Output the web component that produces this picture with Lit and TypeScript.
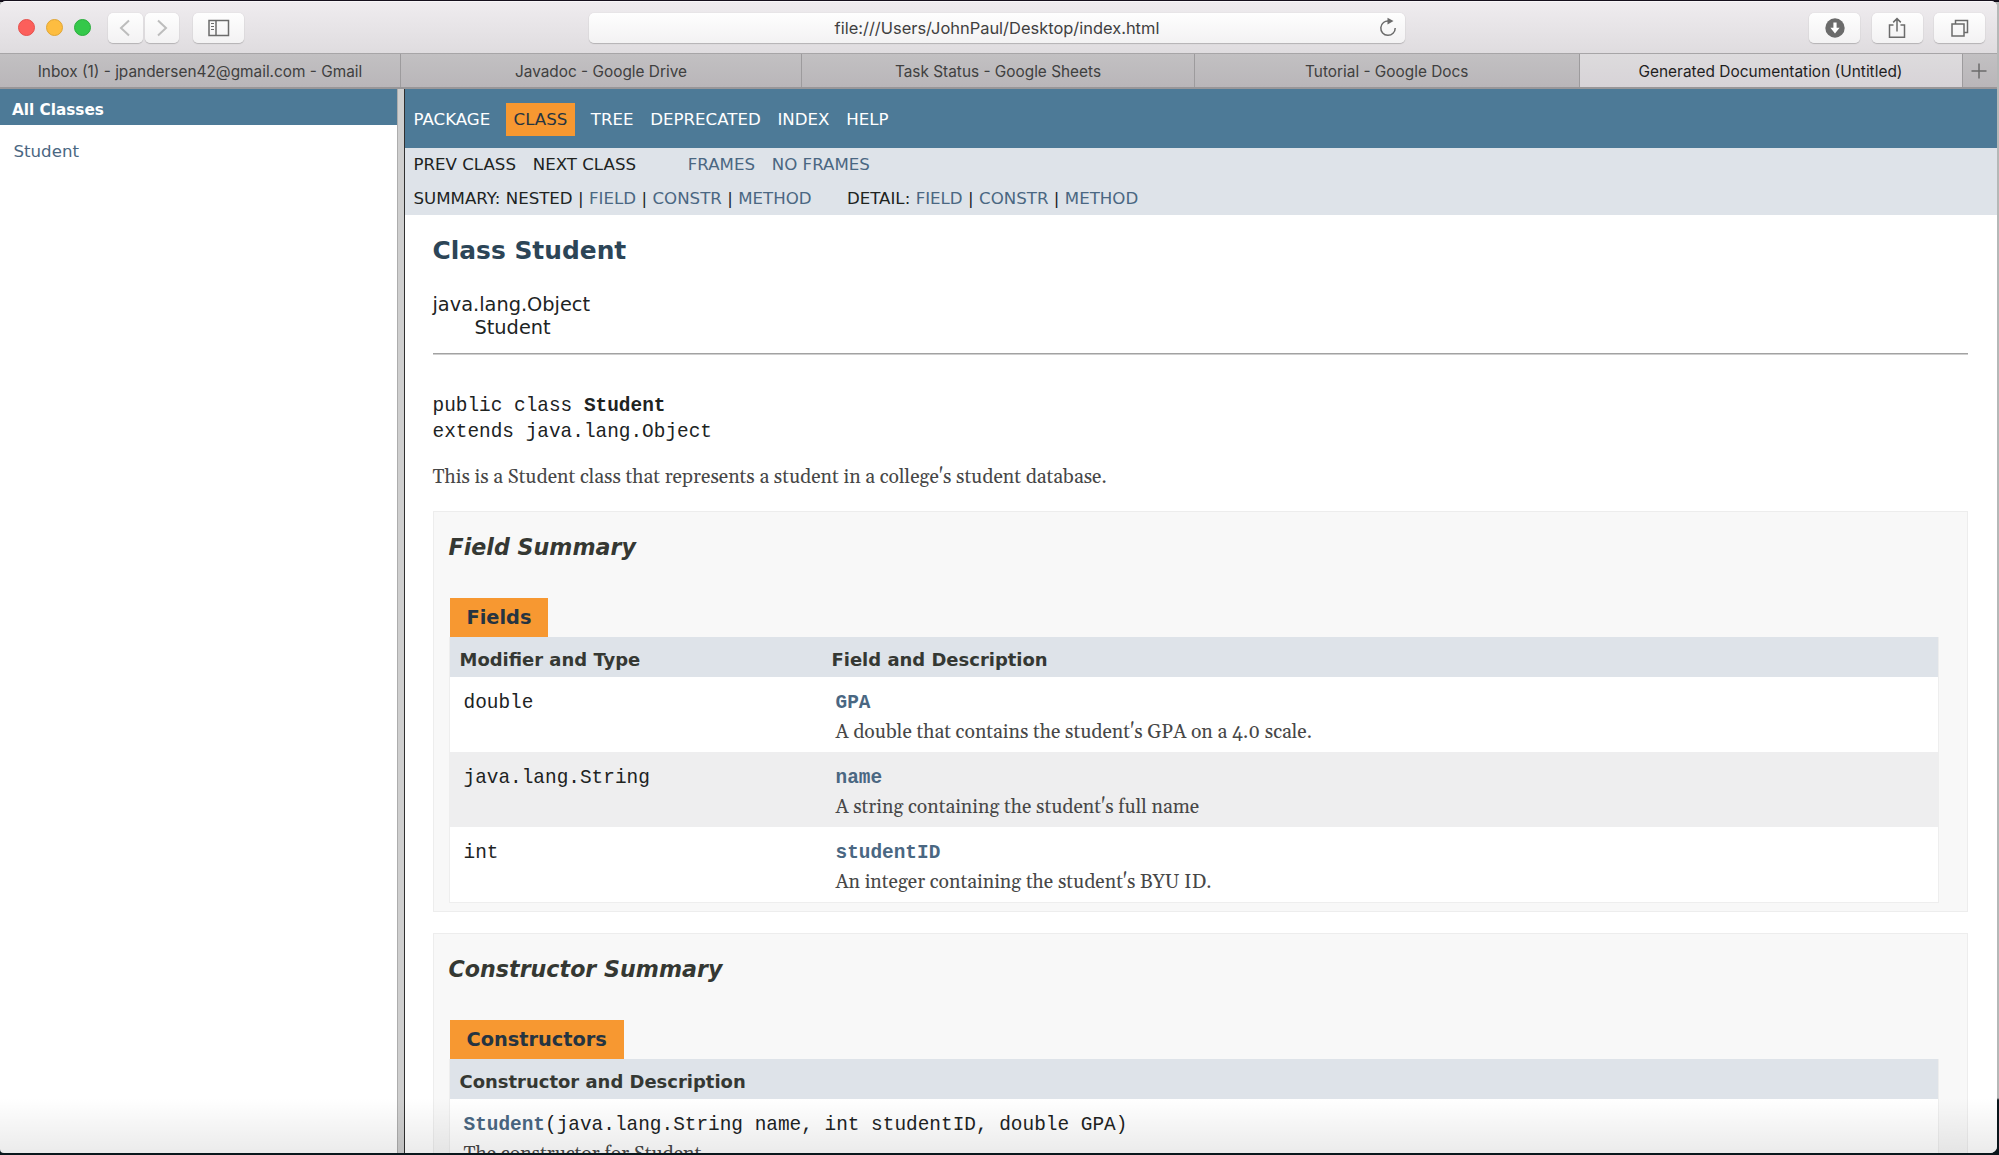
import { LitElement, html, css } from "lit";
import { customElement } from "lit/decorators.js";

const FIELDS = [
  { type: "double", name: "GPA", text: "A double that contains the student's GPA on a 4.0 scale." },
  { type: "java.lang.String", name: "name", text: "A string containing the student's full name" },
  { type: "int", name: "studentID", text: "An integer containing the student's BYU ID." },
];

@customElement("browser-chrome")
class BrowserChrome extends LitElement {
  static styles = css`
    :host { display: block; font-family: Inter, "Liberation Sans", sans-serif; color: #404040; }
    .bar { height: 52px; box-sizing: border-box; padding: 11px 11.5px 0 17.5px; display: flex; align-items: flex-start;
      background: linear-gradient(#efecef, #dfdcdf); border-top: 1px solid #f8f6f8; }
    .light { width: 17px; height: 17px; border-radius: 50%; margin: 6px 11px 0 0; box-sizing: border-box; flex: none; }
    .red { background: #fc5f5b; border: 1px solid #e5504c; }
    .yellow { background: #fdbd40; border: 1px solid #e0a535; }
    .green { background: #34c84a; border: 1px solid #2bad3d; }
    .btn { height: 30px; border-radius: 5px; background: linear-gradient(#fefefe, #f3f2f3);
      box-shadow: 0 1px 1px #b4b2b4, 0 0 1px #c4c2c4; display: flex; align-items: center; justify-content: center; flex: none; }
    .nav { width: 34.5px; margin-right: 2px; }
    .back { margin-left: 6.5px; }
    .side { width: 51px; margin-left: 12px; }
    .url { width: 816px; margin-left: 345px; position: relative; font-size: 16.45px; }
    .reload { position: absolute; right: 7px; top: 4px; }
    .right { margin-left: auto; display: flex; gap: 11.5px; }
    .right .btn { width: 51px; }
    svg { display: block; fill: none; stroke: #6b6b6b; stroke-width: 1.5; }
    svg.chevron { stroke: #bdbdbd; stroke-width: 2; }
    .tabs { height: 36px; box-sizing: border-box; display: flex; border-top: 1px solid #a7a5a7; border-bottom: 2px solid #989698;
      background: linear-gradient(#c2c0c2, #b9b6b9); font-size: 15.38px; line-height: 35px; }
    .tab { box-sizing: border-box; border-right: 1px solid #9d9b9d; text-align: center; flex: none; white-space: nowrap; }
    .t1 { width: 401px; } .t2 { width: 401px; } .t3 { width: 393px; } .t4 { width: 384.5px; }
    .t5 { width: 383px; background: linear-gradient(#dddbdd, #d7d3d7); color: #1e1e1e; font-size: 15.45px; }
    .plus { flex: 1; display: flex; align-items: center; justify-content: center; padding-right: 2px; }
  `;
  render() {
    return html`
      <div class="bar">
        <div class="light red"></div><div class="light yellow"></div><div class="light green"></div>
        <div class="btn nav back"><svg class="chevron" width="12" height="18" viewBox="0 0 12 18"><path d="M10 1.5 2 9l8 7.5"/></svg></div>
        <div class="btn nav"><svg class="chevron" width="12" height="18" viewBox="0 0 12 18"><path d="M2 1.5 10 9l-8 7.5"/></svg></div>
        <div class="btn side"><svg width="22" height="18" viewBox="0 0 22 18"><rect x="1" y="1.5" width="19.5" height="15"/><path d="M8 1.5v15"/><path d="M3 4.5h3M3 7.5h3M3 10.5h3" stroke-width="1"/></svg></div>
        <div class="btn url">file:///Users/JohnPaul/Desktop/index.html
          <svg class="reload" width="20" height="20" viewBox="0 0 20 20"><path d="M11 4A7.2 7.2 0 1 0 17.2 11"/><path d="M9.5 0.8v6.6l6-3.3z" fill="#6b6b6b" stroke="none"/></svg>
        </div>
        <div class="right">
          <div class="btn"><svg width="20" height="20" viewBox="0 0 20 20"><circle cx="10" cy="10" r="9.7" fill="#6b6b6b" stroke="none"/><path d="M8.4 4.5h3.2v5.3h3L10 15.4 5.4 9.8h3z" fill="#fff" stroke="none"/></svg></div>
          <div class="btn"><svg width="20" height="22" viewBox="0 0 20 22"><path d="M6.5 8H2.5v12.2h15V8h-4M10 14.5V1.8M6.2 5.4 10 1.6l3.8 3.8"/></svg></div>
          <div class="btn"><svg width="20" height="18" viewBox="0 0 20 18"><rect x="2" y="5" width="12" height="12"/><path d="M5.5 5V1.5h12v12H14"/></svg></div>
        </div>
      </div>
      <div class="tabs">
        <div class="tab t1">Inbox (1) - jpandersen42@gmail.com - Gmail</div>
        <div class="tab t2">Javadoc - Google Drive</div>
        <div class="tab t3">Task Status - Google Sheets</div>
        <div class="tab t4">Tutorial - Google Docs</div>
        <div class="tab t5">Generated Documentation (Untitled)</div>
        <div class="plus"><svg width="16" height="16" viewBox="0 0 16 16"><path d="M8 .5v15M.5 8h15"/></svg></div>
      </div>`;
  }
}

@customElement("doc-page")
class DocPage extends LitElement {
  static styles = css`
    :host { display: block; font: 16.64px "DejaVu Sans", sans-serif; color: #353833; white-space: nowrap; overflow: hidden; background: #fff; }
    a { color: #4a6782; }
    .top { height: 59px; box-sizing: border-box; padding: 14px 0 0 8.5px; background: #4d7a97; color: #fff; display: flex; line-height: 33.5px; }
    .top span { margin-right: 16.7px; }
    .top .first { margin-right: 15.3px; }
    .top .on { background: #f79831; color: #253441; padding: 0 8px; margin-right: 15.5px; height: 32.5px; }
    .sub { height: 67px; background: #dee3e9; padding-left: 8.5px; line-height: 33.5px; color: #20231f; }
    .row { height: 33.5px; display: flex; }
    .prev { margin-right: 16.8px; } .next { margin-right: 51.8px; } .frames { margin-right: 16.8px; }
    .summary { margin-right: 35.3px; white-space: pre; word-spacing: 0.1px; } .detail { white-space: pre; word-spacing: 0.1px; }
    .body { padding: 0 28.5px 0 27.5px; }
    h2 { margin: 0; height: 71px; line-height: 71px; font-size: 24.9px; color: #2c4557; }
    .tree { padding-top: 6.5px; font-size: 19.35px; line-height: 23.5px; color: #20231f; }
    .leaf { padding-left: 42px; }
    hr { border: 0; height: 2px; margin: 13.5px 0 37.6px; background: linear-gradient(#a2a2a2 50%, #cfcfcf 50%); }
    .mono { font: 19.42px/26.4px "Liberation Mono", monospace; color: #20231f; }
    .serif { font: 19.42px/34px Gelasio, Georgia, "Liberation Serif", serif; height: 30px; color: #474747; font-feature-settings: "onum"; }
    .intro { margin-top: 16px; margin-bottom: 19.6px; }
    .box { height: 401px; box-sizing: border-box; border: 1.5px solid #ededed; background: #f8f8f8; padding: 0 28px 0 15px; margin-bottom: 21px; }
    h3 { margin: 0; height: 85.5px; line-height: 70.5px; font-size: 22.2px; font-style: italic; }
    .cap { display: inline-block; vertical-align: top; height: 39px; box-sizing: border-box; padding: 0 17px; margin-left: 1px; line-height: 39px;
      font-size: 19.35px; font-weight: bold; background: #f79831; color: #253441; }
    .table { border: 1px solid #eee; border-top: 0; background: #fff; }
    .head, .item { display: grid; grid-template-columns: 372px 1fr; }
    .head { height: 40px; line-height: 45px; background: #dee3e9; font-size: 17.98px; font-weight: bold; padding-left: 10px; box-sizing: border-box; }
    .item { height: 75px; box-sizing: border-box; padding: 13px 0 0 14px; }
    .item:nth-child(odd) { background: #eeeeef; }
    .item .mono { line-height: 26px; }
    .name { font-weight: bold; }
  `;
  render() {
    return html`
      <div class="top"><span class="first">PACKAGE</span><span class="on">CLASS</span><span>TREE</span><span>DEPRECATED</span><span>INDEX</span><span>HELP</span></div>
      <div class="sub">
        <div class="row"><span class="prev">PREV CLASS</span><span class="next">NEXT CLASS</span><a class="frames">FRAMES</a><a>NO FRAMES</a></div>
        <div class="row"><span class="summary">SUMMARY: NESTED | <a>FIELD</a> | <a>CONSTR</a> | <a>METHOD</a></span><span class="detail">DETAIL: <a>FIELD</a> | <a>CONSTR</a> | <a>METHOD</a></span></div>
      </div>
      <div class="body">
        <h2>Class Student</h2>
        <div class="tree"><div>java.lang.Object</div><div class="leaf">Student</div></div>
        <hr />
        <div class="mono">public class <b>Student</b></div>
        <div class="mono">extends java.lang.Object</div>
        <div class="serif intro">This is a Student class that represents a student in a college's student database.</div>
        <div class="box">
          <h3>Field Summary</h3>
          <div class="cap">Fields</div>
          <div class="table">
            <div class="head"><span>Modifier and Type</span><span>Field and Description</span></div>
            ${FIELDS.map((f) => html`<div class="item"><div class="mono">${f.type}</div><div><div class="mono"><a class="name">${f.name}</a></div><div class="serif">${f.text}</div></div></div>`)}
          </div>
        </div>
        <div class="box">
          <h3>Constructor Summary</h3>
          <div class="cap">Constructors</div>
          <div class="table">
            <div class="head"><span>Constructor and Description</span></div>
            <div class="item"><div><div class="mono"><a class="name">Student</a>(java.lang.String name, int studentID, double GPA)</div><div class="serif">The constructor for Student.</div></div></div>
          </div>
        </div>
      </div>`;
  }
}

@customElement("app-root")
class AppRoot extends LitElement {
  static styles = css`
    :host { display: block; height: 1155px; overflow: hidden; box-sizing: border-box; padding: 1px 2.5px 2px 0;
      background: linear-gradient(#15101c 2px, transparent 2px), linear-gradient(#b5b8b7 1098px, #0a171c 1100px); }
    .window { height: 1152px; overflow: hidden; border-radius: 6px 6px 7px 4px; position: relative; display: flex; flex-direction: column; background: #fff; }
    .panes { flex: 1; display: flex; min-height: 0; }
    .list { width: 397px; flex: none; font: 16.64px "DejaVu Sans", sans-serif; }
    .title { height: 36px; box-sizing: border-box; background: #4d7a97; color: #fff; font-size: 15.25px; font-weight: bold; padding-left: 12px; line-height: 42.5px; }
    .link { padding: 9px 0 0 13.5px; line-height: 35px; height: 34px; color: #4a6782; }
    .split { width: 8px; flex: none; box-sizing: border-box; background: #cfcfcf; border-left: 1px solid #adadad; border-right: 1px solid #303030; }
    .doc { flex: 1; min-width: 0; }
    .shade { position: absolute; left: 0; right: 0; bottom: 0; height: 55px; pointer-events: none; background: linear-gradient(transparent, rgba(0, 0, 0, 0.08)); }
  `;
  render() {
    return html`
      <div class="window">
        <browser-chrome></browser-chrome>
        <div class="panes">
          <div class="list"><div class="title">All Classes</div><div class="link">Student</div></div>
          <div class="split"></div>
          <doc-page class="doc"></doc-page>
        </div>
        <div class="shade"></div>
      </div>`;
  }
}
